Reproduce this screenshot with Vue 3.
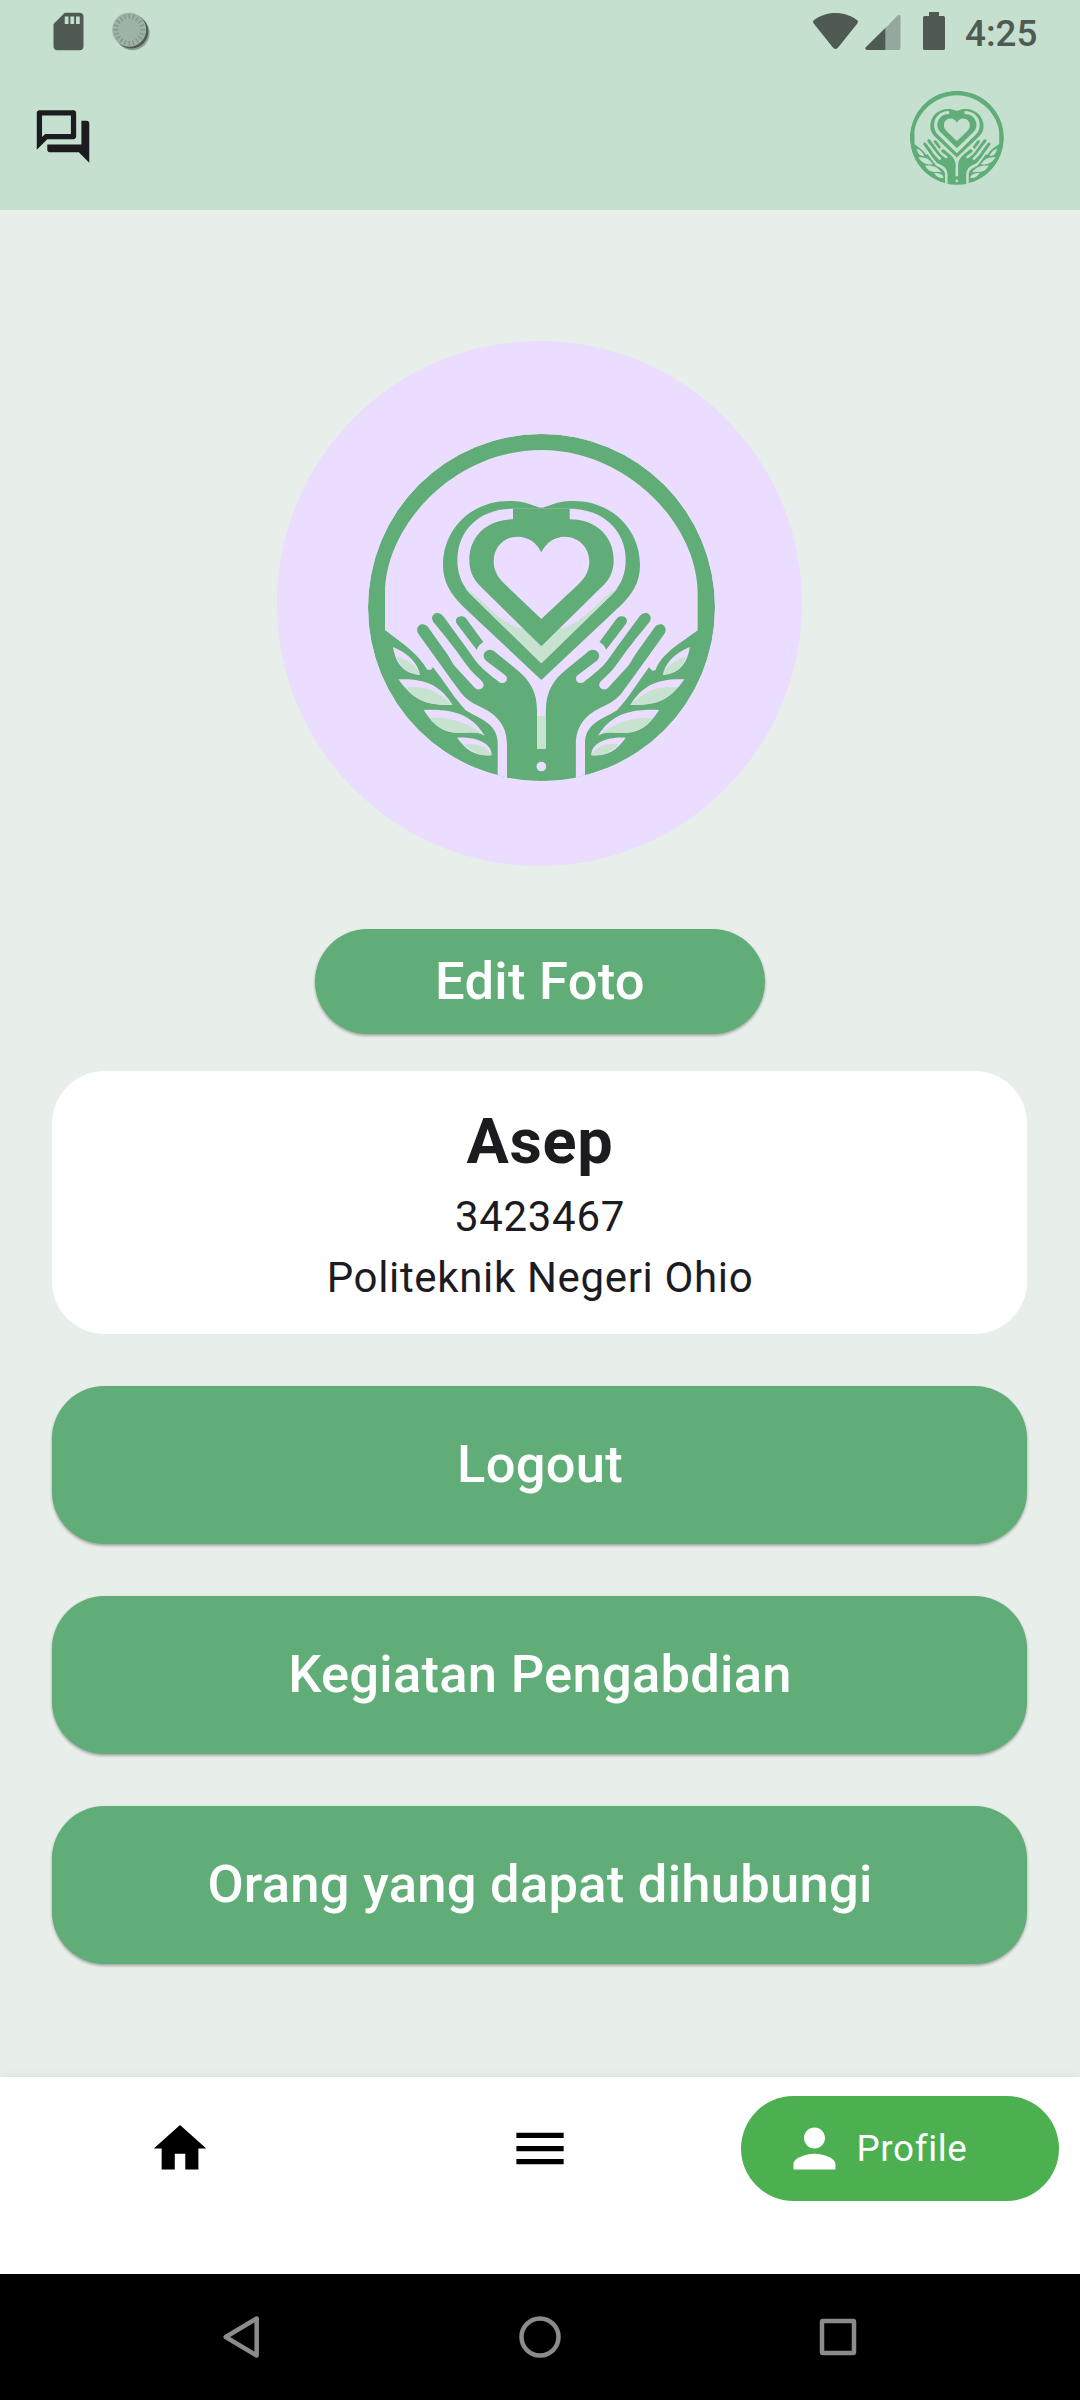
<script setup>
const actions = ['Logout', 'Kegiatan Pengabdian', 'Orang yang dapat dihubungi']
const ticks = Array.from({ length: 20 }, (_, i) => i * 18)
</script>

<template>
  <div class="screen">
    <svg class="defs" width="0" height="0" aria-hidden="true">
      <defs>
        <clipPath id="disc"><circle cx="574.5" cy="562.5" r="520.5" /></clipPath>
        <g id="half">
          <!-- hand with thumb and two fingers -->
          <path class="ink" d="M471 1100V975C471 915 440 882 386 858C362 847 348 837 334 820C300 775 280 745 247 700L204 640C196 622 209 612 219 613C227 614 232 618 236 624L291 701C302 717 305 727 317 741L374 803C384 813 400 808 401 795C401 790 397 785 393 781L373 762C358 748 346 730 333 712C318 690 303 673 290 655L250 606C240 590 252 578 264 579C271 580 276 584 281 590L349 683C362 701 374 720 388 736C398 747 432 775 446 785C459 795 474 786 470 772C469 768 465 765 460 761L408 722C394 709 402 690 420 689C428 689 433 693 438 698L498 747C540 780 561 817 561 872V987H576V1100Z" />
          <path class="ink" d="M380 689L321 612C311 597 325 587 336 589C342 590 346 593 350 598L400 666C392 671 384 678 380 689Z" />
          <!-- leaves -->
          <path class="hole" d="M129 681C180 701 205 735 210 765C166 761 138 738 129 681Z" />
          <path class="tint" d="M140 709C168 720 200 734 209 764C178 763 151 744 140 709Z" />
          <path class="hole" d="M145 778C226 775 270 795 308 855C228 857 191 842 145 778Z" />
          <path class="tint" d="M166 802C225 797 264 812 306 854C228 857 200 840 166 802Z" />
          <path class="hole" d="M221 870C322 866 368 890 404 947C372 929 345 944 302 936C264 928 243 904 221 870Z" />
          <path class="tint" d="M239 894C305 890 350 908 402 945C372 930 345 944 302 936C272 931 256 914 239 894Z" />
          <path class="hole" d="M321 953C377 950 425 968 425 1006C384 1010 350 995 321 953Z" />
          <path class="tint" d="M343 973C385 968 414 984 424 1005C388 1010 366 995 343 973Z" />
        </g>
        <g id="emblem">
          <g clip-path="url(#disc)">
            <circle class="ink" cx="574.5" cy="562.5" r="520.5" />
            <path class="hole" d="M105 630V520C105 315 315 90 574 90C833 90 1043 315 1043 520V631C990 671 935 700 916 751L907 752L897 742C865 785 835 835 801 871C762 896 705 909 705 970V1100H443V970C443 909 386 896 347 871C313 835 283 785 249 742L242 750L232 749C205 701 158 671 105 630Z" />
            <use href="#half" />
            <use href="#half" transform="translate(1148.5 0) scale(-1 1)" />
            <rect class="tint" x="561" y="888" width="26.5" height="99" />
            <circle class="hole" cx="574" cy="1039.500" r="14.500" />
          </g>
          <!-- layered heart -->
          <path class="ink" d="M574 263C556 263 535 243 478 243C360 243 279 330 279 435C279 487 302 522 340 560L574 780L808 560C847 524 870 487 870 435C870 330 788 243 670 243C613 243 592 263 574 263Z" />
          <path class="hole" d="M489 266C390 266 322 330 322 420C322 460 334 493 363 524L574 730L785 524C815 493 827 460 827 420C827 330 758 266 659 266Z" />
          <path class="tint" d="M345 503C410 546 450 615 525 628H622C698 615 738 546 803 503C798 511 792 517 785 524L574 730L363 524C357 518 350 511 345 503Z" />
          <path class="ink" d="M489 266V298C410 298 358 350 358 420C358 455 371 479 394 502L574 679L754 502C779 479 791 455 791 420C791 350 739 298 659 298V266Z" />
          <path class="hole" d="M574 397C560 369 536 350 503 350C461 350 431 383 431 424C431 453 445 474 464 492L574 597L686 492C705 474 718 453 718 424C718 383 686 350 644 350C612 350 588 369 574 397Z" />
        </g>
      </defs>
    </svg>

    <header class="top">
      <div class="status">
        <svg class="sd" width="45" height="45" viewBox="0 0 24 24"><path d="M18 2h-8L4 8v12c0 1.100.9 2 2 2h12c1.100 0 2-.9 2-2V4c0-1.100-.9-2-2-2zm-6 6h-2V4h2v4zm3 0h-2V4h2v4zm3 0h-2V4h2v4z" /></svg>
        <svg class="sync" width="40" height="63" viewBox="110.500 0 40 63">
          <circle cx="133" cy="33" r="17.200" fill="#8fa497" />
          <circle cx="131.800" cy="31.500" r="17" fill="#4f5b52" />
          <circle cx="129.700" cy="29.800" r="17" fill="#9db3a5" />
          <path v-for="t in ticks" :key="t" d="M129.700 13.800v5" stroke="#82968a" stroke-width="1.300" :transform="`rotate(${t} 129.700 29.800)`" />
        </svg>
        <div class="spacer"></div>
        <svg width="45" height="63" viewBox="812.500 0 45 63"><path d="M813 20.500C825 10.500 845 10.500 857 20.500Q858 22 856.800 23.500L837.200 48Q835 50 832.800 48L813.200 23.500Q812 22 813 20.500Z" /></svg>
        <svg class="cell" width="36" height="63" viewBox="864.500 0 36 63">
          <path d="M885 28L897 15.500Q900 13.500 900 17V48Q900 50 898 50H885Z" fill="#94a99b" />
          <path d="M885 27.700V50H866Q864 49 865.500 47Z" />
        </svg>
        <svg class="batt" width="22" height="63" viewBox="923 0 22 63"><path d="M929 12h10v4h4.500q1.500 0 1.500 1.500v31q0 1.500-1.500 1.500h-19q-1.500 0-1.500-1.500v-31q0-1.500 1.500-1.500h4.500z" /></svg>
        <span class="clock">4:25</span>
      </div>
      <div class="bar">
        <svg class="chat" width="63" height="63" viewBox="-0.200 0 24 24"><path d="M15 4v7H5.170L4 12.170V4h11m1-2H3c-.55 0-1 .45-1 1v14l4-4h10c.55 0 1-.45 1-1V3c0-.55-.45-1-1-1zm5 4h-2v9H6v2c0 .55.45 1 1 1h11l4 4V7c0-.55-.45-1-1-1z" /></svg>
        <svg class="brand" width="103" height="103" viewBox="0 0 1140 1140"><use href="#emblem" /></svg>
      </div>
    </header>

    <main class="content">
      <div class="avatar">
        <svg width="380" height="380" viewBox="0 0 1140 1140"><use href="#emblem" /></svg>
      </div>
      <button class="btn edit">Edit Foto</button>
      <section class="card">
        <h1>Asep</h1>
        <p>3423467</p>
        <p>Politeknik Negeri Ohio</p>
      </section>
      <button v-for="a in actions" :key="a" class="btn wide">{{ a }}</button>
    </main>

    <nav class="tabs">
      <div class="tab"><svg width="63" height="63" viewBox="-0.200 0 24 24"><path d="M10 20v-6h4v6h5v-8h3L12 3 2 12h3v8z" /></svg></div>
      <div class="tab"><svg width="63" height="63" viewBox="-0.200 0 24 24"><path d="M3 18h18v-2H3v2zm0-5h18v-2H3v2zm0-7v2h18V6H3z" /></svg></div>
      <div class="tab">
        <div class="pill">
          <svg width="63" height="63" viewBox="0 0 24 24"><path d="M12 12c2.210 0 4-1.790 4-4s-1.790-4-4-4-4 1.790-4 4 1.790 4 4 4zm0 2c-2.670 0-8 1.340-8 4v2h16v-2c0-2.660-5.330-4-8-4z" /></svg>
          <span>Profile</span>
        </div>
      </div>
    </nav>

    <footer class="system">
      <svg width="44" height="44" viewBox="0 0 44 44"><path d="M36.700 3.500V40.500L5.700 22Z" /></svg>
      <svg width="44" height="44" viewBox="0 0 44 44"><circle cx="22" cy="22" r="18.500" /></svg>
      <svg width="44" height="44" viewBox="0 0 44 44"><rect x="6" y="6" width="32" height="32" rx="1" /></svg>
    </footer>
  </div>
</template>

<style>
body { margin: 0; }
</style>

<style scoped>
.screen {
  width: 1080px;
  height: 2400px;
  display: flex;
  flex-direction: column;
  overflow: hidden;
  background: #e8eeea;
  color: #1c1b1f;
  font-family: Roboto, "Liberation Sans", sans-serif;
}
.defs { position: absolute; }
svg { display: block; flex: none; }
.ink { fill: #60ad78; }
.hole { fill: var(--backdrop); }
.tint { fill: #c8e2d0; }

.top {
  --backdrop: #c5e0cf;
  height: 210px;
  flex: none;
  background: #c5e0cf;
}
.status {
  display: flex;
  height: 63px;
  padding: 0 42px 0 46px;
  fill: #4f5b52;
}
.sd { margin-top: 8.500px; }
.sync { margin-left: 19px; }
.spacer { flex: 1; }
.cell { margin-left: 7px; }
.batt { margin-left: 22.500px; }
.clock {
  width: 73px;
  margin-left: 20px;
  font-size: 36.750px;
  font-weight: 500;
  line-height: 67px;
  color: #4f5b52;
  white-space: nowrap;
}
.bar {
  display: flex;
  justify-content: space-between;
  align-items: center;
  height: 147px;
  padding: 0 72px 0 31px;
}
.chat { fill: #1c1b1f; }
.brand { margin-top: 3px; }

.content {
  height: 1867px;
  flex: none;
  display: flex;
  flex-direction: column;
  align-items: center;
  box-sizing: border-box;
  padding: 131px 53px 0 52px;
}
.avatar {
  --backdrop: #eaddff;
  width: 525px;
  height: 525px;
  flex: none;
  display: flex;
  align-items: center;
  justify-content: center;
  border-radius: 50%;
  background: #eaddff;
}
.avatar svg { margin: 13px 0 0 1px; }
.btn {
  flex: none;
  border: 0;
  padding: 0 0 2px;
  border-radius: 52.500px;
  background: #60ad78;
  color: #fff;
  font: 500 52.500px Roboto, "Liberation Sans", sans-serif;
  letter-spacing: 0.26px;
  text-indent: 1px;
  box-shadow: 0 2px 3px rgba(0, 0, 0, 0.24), 0 1px 3px rgba(0, 0, 0, 0.1);
}
.edit { width: 450px; height: 105px; margin-top: 63px; }
.wide { width: 975px; height: 157.500px; margin-top: 52.500px; }
.card {
  width: 975px;
  height: 262.500px;
  flex: none;
  box-sizing: border-box;
  margin-top: 37px;
  padding-top: 26px;
  border-radius: 52.500px;
  background: #fff;
  text-align: center;
  text-indent: 1px;
}
.card h1, .card p { margin: 0; }
.card h1 { font-size: 63px; font-weight: 700; line-height: 90px; letter-spacing: 0.660px; }
.card p { font-size: 42px; line-height: 60px; letter-spacing: 0.660px; }
.card p + p { margin-top: 1px; }

.tabs {
  display: flex;
  height: 197px;
  flex: none;
  background: #fff;
  box-shadow: 0 -1px 8px rgba(0, 0, 0, 0.06);
}
.tab {
  flex: 1;
  display: flex;
  justify-content: center;
  align-items: flex-start;
}
.tab > svg { margin: 40px 1px 0 0; }
.pill {
  width: 318px;
  height: 105px;
  margin-top: 18.500px;
  box-sizing: border-box;
  padding-left: 41.500px;
  display: flex;
  align-items: center;
  border-radius: 52.500px;
  background: #4caf50;
  color: #fff;
  fill: #fff;
}
.pill span { margin-left: 11px; font-size: 36.750px; letter-spacing: 0.660px; }

.system {
  display: flex;
  justify-content: center;
  align-items: center;
  gap: 254px;
  height: 126px;
  flex: none;
  background: #000;
  fill: none;
  stroke: #8b8b8b;
  stroke-width: 4.500;
  stroke-linejoin: round;
}
</style>
